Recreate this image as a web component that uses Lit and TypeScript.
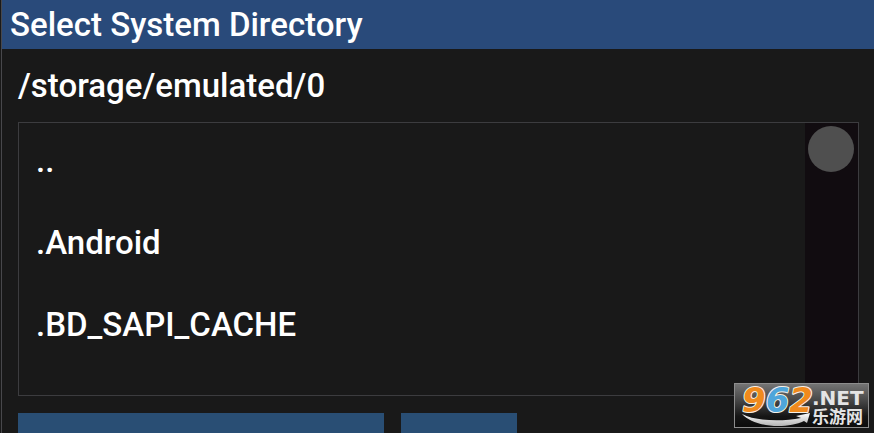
import { LitElement, html, css } from "lit";
import { customElement, state } from "lit/decorators.js";

@customElement("site-badge")
class SiteBadge extends LitElement {
  static styles = css`
    :host {
      display: block;
      box-sizing: border-box;
      width: 135px;
      height: 45px;
      border: 1px solid #8d8d8d;
      background: linear-gradient(#747474, #454545 40%, #161616 75%, #0c0c0c);
    }
    svg {
      display: block;
      width: 100%;
      height: 100%;
      overflow: visible;
    }
    .digits {
      font: italic bold 34px "DejaVu Sans", sans-serif;
      stroke: #f6f1e8;
      stroke-width: 2px;
      stroke-linejoin: round;
      paint-order: stroke;
    }
    .orange {
      fill: #ef8a1d;
    }
    .blue {
      fill: #4fa5da;
    }
    .latin {
      font: bold 20px "DejaVu Sans", sans-serif;
      fill: #e4e4e4;
    }
    .han {
      font: bold 17px "Noto Sans CJK SC", sans-serif;
      fill: #e4e4e4;
    }
  `;

  render() {
    return html`
      <svg viewBox="0 0 133 43" role="img" aria-label="962.NET 乐游网">
        <defs>
          <linearGradient id="silver" x1="0" y1="0" x2="0" y2="1">
            <stop offset="0" stop-color="#ffffff" />
            <stop offset="1" stop-color="#b4b4b4" />
          </linearGradient>
        </defs>
        <path
          d="M7 30 C20 37 46 38 66 34 L61 32 L75 29 L72 39 L69 37 C52 45 20 44 7 30 Z"
          fill="url(#silver)"
        />
        <text class="digits" x="7" y="28"><tspan class="orange">9</tspan><tspan class="blue">6</tspan><tspan class="orange">2</tspan></text>
        <text class="latin" x="77" y="21">.NET</text>
        <text class="han" x="77" y="39">乐游网</text>
      </svg>
    `;
  }
}

@customElement("app-root")
class AppRoot extends LitElement {
  static styles = css`
    :host {
      display: block;
      position: relative;
      height: 100vh;
      overflow: hidden;
      background: #191919;
      color: #fff;
      font: 500 33px/38px Roboto, sans-serif;
    }
    .dialog {
      margin-left: 1px;
      border-left: 1px solid #48484c;
    }
    h1 {
      margin: 0;
      padding: 6px 8px 5px;
      background: #294a7a;
      font: inherit;
    }
    .body {
      display: flex;
      flex-direction: column;
      gap: 17px;
      padding: 18px 15px 18px 16px;
    }
    .path {
      margin: 0;
    }
    .list {
      display: flex;
      border: 1px solid #3c3c3f;
    }
    .rows {
      flex: 1;
      display: flex;
      flex-direction: column;
      gap: 44px;
      margin: 0;
      padding: 19px 17px 51px;
      list-style: none;
    }
    .row {
      display: block;
      width: 100%;
      padding: 0;
      border: 0;
      background: none;
      color: inherit;
      font: inherit;
      text-align: left;
    }
    .track {
      box-sizing: border-box;
      width: 53px;
      padding: 3px;
      background: #110c10;
    }
    .thumb {
      width: 46px;
      height: 46px;
      border-radius: 50%;
      background: #4f4f4f;
    }
    .actions {
      display: flex;
      gap: 17px;
    }
    .action {
      height: 62px;
      padding: 0;
      border: 0;
      background: #294e74;
    }
    .use {
      flex: 0 1 366px;
    }
    .cancel {
      flex: 0 1 116px;
    }
    site-badge {
      position: absolute;
      right: 5px;
      bottom: 5px;
    }
  `;

  @state() private entries = ["..", ".Android", ".BD_SAPI_CACHE"];

  render() {
    return html`
      <main class="dialog">
        <h1>Select System Directory</h1>
        <div class="body">
          <p class="path">/storage/emulated/0</p>
          <div class="list">
            <ul class="rows" id="rows">
              ${this.entries.map(
                (name) => html`<li><button class="row">${name}</button></li>`
              )}
            </ul>
            <div
              class="track"
              role="scrollbar"
              aria-controls="rows"
              aria-orientation="vertical"
              aria-valuenow="0"
            >
              <div class="thumb"></div>
            </div>
          </div>
          <div class="actions">
            <button class="action use" aria-label="Use directory"></button>
            <button class="action cancel" aria-label="Cancel"></button>
          </div>
        </div>
      </main>
      <site-badge></site-badge>
    `;
  }
}
